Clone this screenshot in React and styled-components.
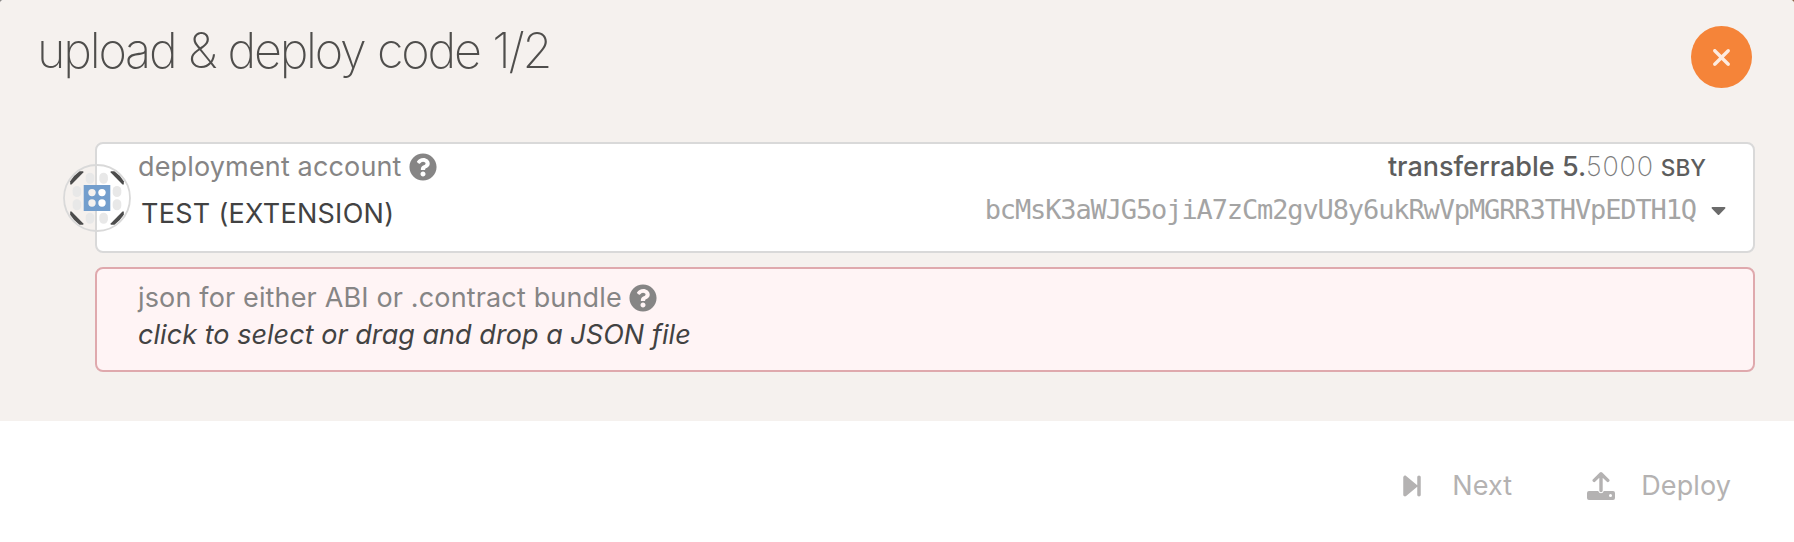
import React from "react";
import styled, { createGlobalStyle } from "styled-components";
import { FaQuestionCircle, FaCaretDown } from "react-icons/fa";
import { FaForwardStep, FaXmark } from "react-icons/fa6";

const GlobalStyle = createGlobalStyle`
  * { box-sizing: border-box; }
  body {
    margin: 0;
    background: linear-gradient(90deg, #8c8a88 50%, #8a6448 50%);
    font: 400 27px/36px Inter, "Liberation Sans", sans-serif;
  }
`;

const Modal = styled.div`
  display: flex;
  flex-direction: column;
  height: 542px;
  overflow: hidden;
  background: #fff;
  border-radius: 4px 4px 0 0;
`;

const Body = styled.main`
  height: 421px;
  background: #f5f1ee;
`;

const Header = styled.header`
  display: flex;
  justify-content: space-between;
  align-items: flex-start;
  height: 142px;
  padding: 21px 42px 0 37px;
`;

const Title = styled.h1`
  margin: 0;
  color: #4f4e4c;
  font-size: 48.5px;
  font-weight: 200;
  line-height: 60px;
  letter-spacing: -2.2px;
  word-spacing: 1px;
`;

const CloseButton = styled.button`
  display: flex;
  align-items: center;
  justify-content: center;
  width: 61px;
  height: 62px;
  margin-top: 5px;
  padding: 0;
  border: 0;
  border-radius: 50%;
  background: #f58439;
  color: #fdebe0;
  svg { width: 27px; height: 27px; }
`;

const Fields = styled.section`
  display: flex;
  flex-direction: column;
  gap: 14px;
  padding: 0 39px 0 95px;
`;

const Field = styled.div`
  position: relative;
  height: ${({ $error }) => ($error ? 105 : 111)}px;
  padding: ${({ $error }) => ($error ? "11px 47px 0 41px" : "5px 27px 0 41px")};
  border: 2px solid ${({ $error }) => ($error ? "#dfa9ad" : "#d9d9d9")};
  border-radius: 8px;
  background: ${({ $error }) => ($error ? "#fff4f5" : "#fff")};
`;

const Row = styled.div`
  display: flex;
  justify-content: space-between;
  align-items: flex-start;
  height: ${({ $height }) => $height}px;
  white-space: nowrap;
`;

const Label = styled.label`
  display: flex;
  align-items: center;
  gap: 7px;
  height: 36px;
  color: #868585;
  letter-spacing: 0.15px;
  svg { width: 28px; height: 28px; margin-top: -1px; }
`;

const Balance = styled.div`
  margin-right: 20px;
  color: #5d5d5d;
  font-weight: 500;
`;

const Decimals = styled.span`
  margin-right: 7px;
  color: #7c7c7c;
  font-weight: 200;
  letter-spacing: 0.8px;
`;

const Unit = styled.span`
  font-size: 22.6px;
`;

const AccountName = styled.div`
  padding: 4px 0 0 3px;
  color: #424242;
  letter-spacing: 0.28px;
`;

const Address = styled.div`
  display: flex;
  align-items: center;
  gap: 15px;
  color: #a4a4a4;
  font-family: "DejaVu Sans Mono", monospace;
  letter-spacing: -1.12px;
  svg { width: 15px; height: 24px; color: #6b6b6b; }
`;

const Avatar = styled.svg`
  position: absolute;
  left: -35px;
  top: 19px;
  width: 70px;
  height: 70px;
`;

const DropHint = styled.div`
  margin-top: 1px;
  color: #424242;
  font-style: italic;
  letter-spacing: 0.04px;
`;

const Footer = styled.footer`
  display: flex;
  justify-content: flex-end;
  align-items: center;
  gap: 75px;
  height: 121px;
  padding: 8px 63px 0 0;
`;

const Action = styled.button`
  display: flex;
  align-items: center;
  gap: ${({ $gap }) => $gap}px;
  padding: 0;
  border: 0;
  background: none;
  color: #b4b2b2;
  font: inherit;
  letter-spacing: 0.1px;
`;

const StepIcon = styled(FaForwardStep)`
  width: 18px;
  height: 28px;
`;

const DOTS = [[30, 29.6], [40, 29.6], [30, 40], [40, 40]];
const BLOBS = [[28, 15.2], [41.6, 15.2], [28, 55.3], [41.6, 55.3], [14.9, 28.6], [55, 28.6], [14.9, 41.8], [55, 41.8]];

function Identicon() {
  return (
    <Avatar viewBox="0 0 70 70">
      {BLOBS.map(([x, y]) => (
        <rect key={`${x}-${y}`} x={x - 4.3} y={y - 5.5} width="8.6" height="11" rx="4.2" fill="#e8e8e8" />
      ))}
      {[[1, 1], [-1, 1], [1, -1], [-1, -1]].map(([sx, sy]) => (
        <path
          key={`${sx}${sy}`}
          transform={`translate(35 35) scale(${sx} ${sy})`}
          d="M-26.8 -13.5V-16.8Q-23 -23 -17.5 -26.8H-13.7V-25.5L-25.5 -13.5Z"
          fill="#4c4c4c"
        />
      ))}
      <rect x="21.7" y="22" width="26.6" height="26" fill="#739ecd" />
      {DOTS.map(([x, y]) => (
        <circle key={`${x}-${y}`} cx={x} cy={y} r="3.7" fill={x < 35 ? "#f5f1ee" : "#fff"} />
      ))}
      <circle cx="35" cy="35" r="33" fill="none" stroke="#d9d9d9" strokeWidth="1.8" />
    </Avatar>
  );
}

function UploadIcon() {
  return (
    <svg width="28" height="28" viewBox="0 0 28 28">
      <path
        d="M2 19H11.2Q12 21.3 14 21.3T16.8 19H26Q28 19 28 21V26Q28 28 26 28H2Q0 28 0 26V21Q0 19 2 19ZM23.5 22A1.5 1.5 0 1 0 23.5 25A1.5 1.5 0 0 0 23.5 22Z"
        fill="currentColor"
        fillRule="evenodd"
      />
      <path d="M14 18.5V2.5M7.2 8.4L14 1.8L20.8 8.4" fill="none" stroke="currentColor" strokeWidth="3.4" strokeLinecap="round" strokeLinejoin="round" />
    </svg>
  );
}

export default function App() {
  return (
    <>
      <GlobalStyle />
      <Modal>
        <Body>
          <Header>
            <Title>upload &amp; deploy code 1/2</Title>
            <CloseButton aria-label="Close"><FaXmark /></CloseButton>
          </Header>
          <Fields>
            <Field>
              <Identicon />
              <Row $height={43}>
                <Label>deployment account<FaQuestionCircle /></Label>
                <Balance>transferrable 5.<Decimals>5000</Decimals><Unit>SBY</Unit></Balance>
              </Row>
              <Row $height={40}>
                <AccountName>TEST (EXTENSION)</AccountName>
                <Address>bcMsK3aWJG5ojiA7zCm2gvU8y6ukRwVpMGRR3THVpEDTH1Q<FaCaretDown /></Address>
              </Row>
            </Field>
            <Field $error>
              <Label>json for either ABI or .contract bundle<FaQuestionCircle /></Label>
              <DropHint>click to select or drag and drop a JSON file</DropHint>
            </Field>
          </Fields>
        </Body>
        <Footer>
          <Action $gap={31}><StepIcon />Next</Action>
          <Action $gap={26}><UploadIcon />Deploy</Action>
        </Footer>
      </Modal>
    </>
  );
}
